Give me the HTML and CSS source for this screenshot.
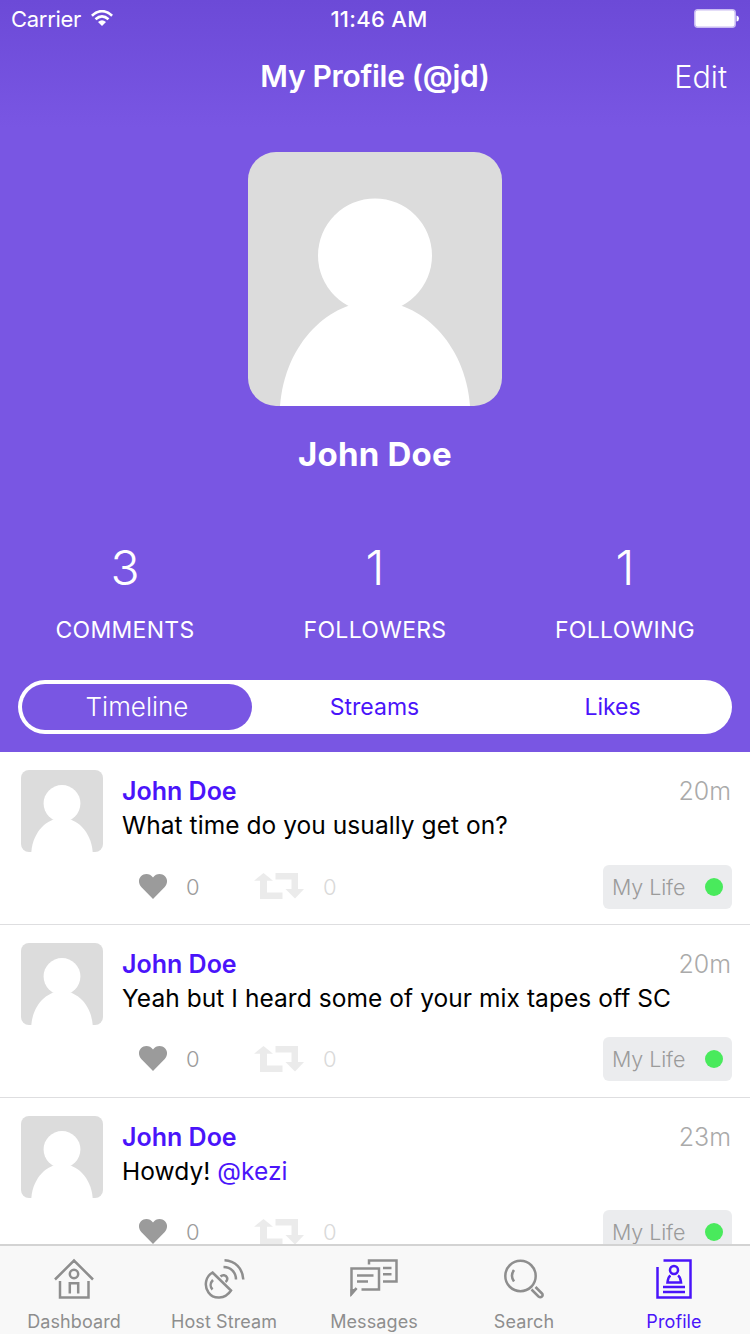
FILE: index.html
```html
<!DOCTYPE html>
<html lang="en">
<head>
<meta charset="utf-8">
<title>My Profile</title>
<link rel="stylesheet" href="styles.css">
</head>
<body>
<svg class="sprite" width="0" height="0" aria-hidden="true">
  <symbol id="person" viewBox="0 0 254 254">
    <rect width="254" height="254" fill="#dcdcdc"/>
    <circle cx="127" cy="103.500" r="57" fill="#fff"/>
    <path d="M32 254C37 190 82 149 127 149C172 149 217 190 222 254Z" fill="#fff"/>
  </symbol>
  <symbol id="heart" viewBox="0 0 28 25">
    <path d="M14 25L2.500 13.300C-.8 9.800-.8 5 2 2.200C5.200-.9 11-.8 14 3.500C17-.8 22.800-.9 26 2.200C28.800 5 28.800 9.800 25.500 13.300Z" fill="#9b9b9b"/>
  </symbol>
  <symbol id="repost" viewBox="0 0 50 26">
    <path d="M9.500 0L19 7.800H13V19.500H28.500V26H6V7.800H0ZM21.500 0H44V16H50L41 25.500L31.500 16H37.500V6.500H21.500Z" fill="#ebebeb"/>
  </symbol>
</svg>
<div class="screen">
  <header class="header">
    <div class="status">
      <div class="carrier"><span>Carrier</span>
        <svg width="22" height="17" viewBox="0 0 22 17" fill="none" stroke="#fff" stroke-width="2.700"><path d="M.9 5.700Q11-3.300 21.100 5.700M4.500 9.300Q11 3.500 17.500 9.300"/><path d="M7 12Q11 8.400 15 12L11 16Z" fill="#fff" stroke="none"/></svg>
      </div>
      <span class="clock">11:46 AM</span>
      <svg class="battery" width="46" height="20" viewBox="0 0 46 20"><rect x=".8" y=".8" width="40.400" height="17.400" rx="3" fill="#fff" stroke="#c9bcf2" stroke-width="1.500"/><path d="M42.500 6.500Q45 7 45 9.500T42.500 12.500Z" fill="#fff"/></svg>
    </div>
    <div class="nav"><span></span><h1>My Profile (@jd)</h1><span class="edit">Edit</span></div>
    <svg class="portrait"><use href="#person"/></svg>
    <h2>John Doe</h2>
    <div class="stats">
      <div class="stat"><b>3</b><span>COMMENTS</span></div>
      <div class="stat"><b>1</b><span>FOLLOWERS</span></div>
      <div class="stat"><b>1</b><span>FOLLOWING</span></div>
    </div>
    <div class="segments"><span class="active">Timeline</span><span>Streams</span><span>Likes</span></div>
  </header>
  <main class="feed">
    <article class="post">
      <svg class="avatar"><use href="#person"/></svg>
      <div class="body">
        <div class="top"><strong>John Doe</strong><time>20m</time></div>
        <p>What time do you usually get on?</p>
        <div class="actions"><svg class="heart"><use href="#heart"/></svg><span class="likes">0</span><svg class="repost"><use href="#repost"/></svg><span class="reposts">0</span><div class="tag">My Life<i></i></div></div>
      </div>
    </article>
    <article class="post">
      <svg class="avatar"><use href="#person"/></svg>
      <div class="body">
        <div class="top"><strong>John Doe</strong><time>20m</time></div>
        <p>Yeah but I heard some of your mix tapes off SC</p>
        <div class="actions"><svg class="heart"><use href="#heart"/></svg><span class="likes">0</span><svg class="repost"><use href="#repost"/></svg><span class="reposts">0</span><div class="tag">My Life<i></i></div></div>
      </div>
    </article>
    <article class="post">
      <svg class="avatar"><use href="#person"/></svg>
      <div class="body">
        <div class="top"><strong>John Doe</strong><time>23m</time></div>
        <p>Howdy! <a>@kezi</a></p>
        <div class="actions"><svg class="heart"><use href="#heart"/></svg><span class="likes">0</span><svg class="repost"><use href="#repost"/></svg><span class="reposts">0</span><div class="tag">My Life<i></i></div></div>
      </div>
    </article>
  </main>
  <nav class="tabs">
    <div class="tab"><svg width="50" height="44" viewBox="0 0 50 44"><path d="M6 23.500L25 4.500L44 23.500M11 25V41.500H39.500V25M20.800 37.500V27.200H29.200V37.500"/><circle cx="25" cy="18" r="4.200"/></svg><span>Dashboard</span></div>
    <div class="tab"><svg width="50" height="44" viewBox="0 0 50 44"><path d="M13.500 16.500L32 34.500C26 43.500 14.500 43.500 9.500 36.500C4.500 29.500 7 20 13.500 16.500ZM14 24C11 27 11 31 13.500 33.500M21.500 20.500C23.500 18.500 27 19 28 21.500C28.700 23.500 28 25 26.500 26M24.500 11C32 11 37 16.500 37 23.500M25.500 4.300C36 4.800 43.800 12.500 44.300 23.500"/></svg><span>Host Stream</span></div>
    <div class="tab"><svg width="50" height="44" viewBox="0 0 50 44"><path d="M20 8.500V4.500H47.500V25.500H34M34 12H42.500M34 18.300H42.500M12.500 33.500H30V12.500H2.500V37.500L7.500 32M8 19.500H24.500M8 25.500H19"/><path d="M1.500 41V33H8.500Z" fill="#8e8e8e" stroke="none"/></svg><span>Messages</span></div>
    <div class="tab"><svg width="50" height="44" viewBox="0 0 50 44"><circle cx="21.500" cy="20" r="15.200"/><path d="M15 14C12.500 17.500 12.500 22 15 25.500M36.500 31L43 37.500C45 39.500 42 42.500 39.500 40.500L32.500 33.500"/></svg><span>Search</span></div>
    <div class="tab current"><svg width="50" height="44" viewBox="0 0 50 44"><path d="M8.500 11V41.500H41.500V4.500H14.500M14 31H36M14 36H36M21.500 19.500C19 21 19 23 18.500 26.500H32C31.500 23 31.500 21 29 19.500"/><circle cx="25" cy="14" r="4"/></svg><span>Profile</span></div>
  </nav>
</div>
</body>
</html>
```
FILE: styles.css
```css
* { box-sizing: border-box; }
body { margin: 0; font-family: Inter, "Liberation Sans", sans-serif; }
h1, h2, p { margin: 0; }
.sprite { position: absolute; }
.screen { width: 750px; height: 1334px; display: flex; flex-direction: column; overflow: hidden; background: #fff; }

.header { height: 752px; flex: none; display: flex; flex-direction: column; align-items: center; color: #fff; background: linear-gradient(#6c4ad7 0, #7956e3 128px); }
.status { width: 100%; height: 40px; padding: 0 10px 2px 11px; display: grid; grid-template-columns: 1fr auto 1fr; align-items: center; font-size: 22px; }
.carrier { display: flex; align-items: center; gap: 10px; letter-spacing: -.3px; }
.carrier svg { margin-bottom: 2px; }
.clock { font-weight: 500; letter-spacing: .3px; margin-left: 7px; }
.battery { justify-self: end; }
.nav { width: 100%; height: 88px; padding: 0 23px 16px; display: grid; grid-template-columns: 1fr auto 1fr; align-items: center; }
.nav h1 { font-size: 30px; font-weight: 600; letter-spacing: -.3px; }
.edit { justify-self: end; font-size: 30.500px; font-weight: 300; }
.portrait { width: 254px; height: 254px; margin-top: 24px; border-radius: 28px; }
.header h2 { margin-top: 28px; font-size: 33px; line-height: 40px; font-weight: 700; letter-spacing: .2px; }
.stats { width: 100%; margin-top: 68px; display: grid; grid-template-columns: repeat(3, 1fr); }
.stat { display: flex; flex-direction: column; align-items: center; }
.stat b { font-size: 48px; line-height: 52px; font-weight: 300; }
.stat span { margin-top: 20px; font-size: 23px; line-height: 32px; letter-spacing: .3px; font-weight: 400; }
.segments { width: 714px; height: 54px; margin-top: 34px; padding: 4px 0 4px 4px; border-radius: 27px; background: #fff; display: grid; grid-template-columns: 230px 1fr 1fr; align-items: center; text-align: center; color: #4a14fa; font-size: 23px; }
.segments span + span { padding-left: 5px; }
.segments span:last-child { padding-left: 1px; }
.segments .active { height: 46px; line-height: 46px; border-radius: 23px; background: #7956e3; color: #fff; font-size: 26px; font-weight: 300; }

.feed { height: 492px; flex: none; overflow: hidden; }
.post { height: 172.800px; border-bottom: 1.500px solid #dedee0; padding: 18px 18px 0 21.400px; display: flex; gap: 18.600px; }
.avatar { width: 82px; height: 82px; flex: none; border-radius: 8px; }
.body { flex: 1; padding-top: 4px; }
.top { display: flex; justify-content: space-between; line-height: 34px; font-size: 25px; }
.top strong { color: #4a14fa; font-weight: 600; }
.top time { color: #aaa; font-weight: 300; margin-right: 1px; }
.post p { line-height: 35px; font-size: 24.500px; letter-spacing: .06px; color: #000; }
.post a { color: #4a14fa; }
.actions { height: 44px; margin-top: 21.500px; display: flex; align-items: center; font-size: 22px; font-weight: 300; color: #9b9b9b; }
.heart { width: 28px; height: 25px; margin: 0 0 1px 17px; }
.likes { width: 14px; margin-left: 19px; }
.repost { width: 50px; height: 26px; margin: 0 0 1px 54px; }
.reposts { margin-left: 19px; color: #d9d9d9; }
.tag { width: 129px; height: 44px; margin-left: auto; padding: 0 9px; display: flex; align-items: center; justify-content: space-between; border-radius: 6px; background: #ebecee; font-size: 21.500px; letter-spacing: -.1px; }
.tag i { width: 18px; height: 18px; border-radius: 50%; background: #49ea5c; }

.tabs { height: 90px; flex: none; border-top: 2px solid #d3d3d3; background: #f8f8f8; display: grid; grid-template-columns: repeat(5, 150px); margin-left: -1px; width: 751px; }
.tab { padding-top: 10px; display: flex; flex-direction: column; align-items: center; color: #8e8e8e; }
.tab svg { fill: none; stroke: currentColor; stroke-width: 2.500px; }
.tab span { margin-top: 9px; font-size: 18px; line-height: 26px; letter-spacing: .1px; }
.tab.current { color: #4a14fa; }
```
